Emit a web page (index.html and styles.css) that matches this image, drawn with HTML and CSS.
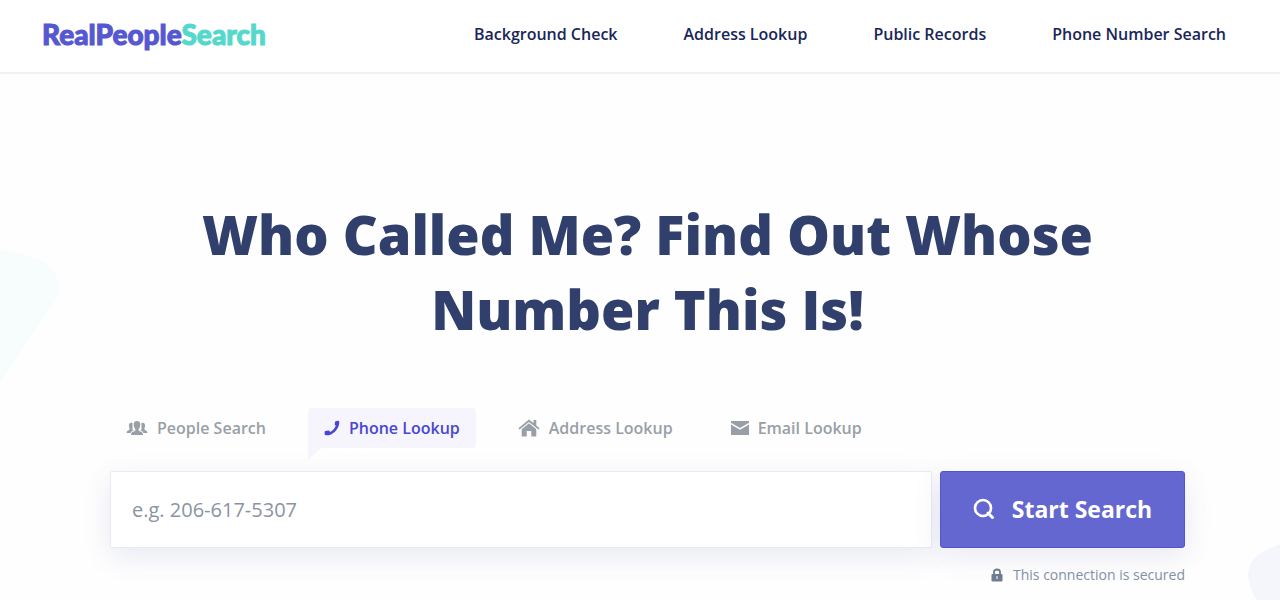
FILE: index.html
```html
<!DOCTYPE html>
<html lang="en">
<head>
    <meta charset="UTF-8">
    <meta name="viewport" content="width=device-width, initial-scale=1.0">
    <title>Phone Lookup - RealPeopleSearch</title>
    <link rel="stylesheet" href="styles.css">
</head>
<body>
    <header class="header">
        <a href="#" class="logo">RealPeople<span>Search</span></a>
        <nav class="nav">
            <a href="#">Background Check</a>
            <a href="#">Address Lookup</a>
            <a href="#">Public Records</a>
            <a href="#">Phone Number Search</a>
        </nav>
    </header>

    <main class="hero">
        <svg class="shape shape-left" width="60" height="140" viewBox="0 0 60 140" aria-hidden="true">
            <path d="M0 2L38 13Q53 19 58 35Q61 46 54 57L36 82L0 136Z" fill="#f6fdfc"/>
        </svg>
        <svg class="shape shape-right" width="32" height="58" viewBox="0 0 32 58" aria-hidden="true">
            <path d="M32 1L16 8Q0 17 0 33Q1 47 10 58H32Z" fill="#f5f5fc"/>
        </svg>

        <div class="container">
            <h1>Who Called Me? Find Out Whose Number This Is!</h1>

            <div class="tabs">
                <button type="button" class="tab">
                    <svg width="22" height="16" viewBox="0 0 22 16" fill="currentColor" aria-hidden="true">
                        <path d="M11 1C8.600 1 7.500 2.600 7.700 5C7.800 7 8.500 8.300 9.400 9V10.500C8.500 11.500 5 11.500 5 15H17C17 11.500 13.500 11.500 12.600 10.500V9C13.500 8.300 14.200 7 14.300 5C14.500 2.600 13.400 1 11 1Z"/>
                        <path d="M6.600 3C4.500 2 2.800 3.200 2.900 5.500C3 7.500 3.500 8.500 3.700 9C3.500 10.500 1 10 .5 13H4.500C5 11.500 6.500 10.800 7.600 10.300C7.300 9.800 6 9.700 6.500 8.500C6.700 8 6.300 5 6.600 3Z"/>
                        <path d="M15.400 3C17.500 2 19.200 3.200 19.100 5.500C19 7.500 18.500 8.500 18.300 9C18.500 10.500 21 10 21.500 13H17.500C17 11.500 15.500 10.800 14.400 10.300C14.700 9.800 16 9.700 15.500 8.500C15.300 8 15.700 5 15.400 3Z"/>
                    </svg>
                    People Search
                </button>
                <button type="button" class="tab active">
                    <svg width="16" height="16" viewBox="0 0 16 16" fill="currentColor" aria-hidden="true">
                        <path d="M11.600 1.300L14.200.7Q15 .6 15.200 1.400C16 6 11.500 13.500 4.700 15.200Q2.500 15.500 1.200 15Q.6 14.700.6 14L.7 11.800Q.8 11.100 1.500 10.900L4.500 10.500Q5.200 10.400 5.500 11L6 11.900C8.500 10.900 10.600 8.700 11.800 5.700L11 5.100Q10.500 4.600 10.700 4L11.100 1.900Q11.200 1.400 11.600 1.300Z"/>
                    </svg>
                    Phone Lookup
                </button>
                <button type="button" class="tab">
                    <svg width="22" height="18" viewBox="0 0 22 18" fill="currentColor" aria-hidden="true">
                        <path d="M11 .5L.4 9.200L1.600 10.500L11 2.900L20.400 10.500L21.600 9.200L18.300 6.400V1H15.500V4.100Z"/>
                        <path d="M11 4.300L3.700 10.200V17.500H8.700V12H13.300V17.500H18.300V10.200Z"/>
                    </svg>
                    Address Lookup
                </button>
                <button type="button" class="tab">
                    <svg width="18" height="14" viewBox="0 0 18 14" fill="currentColor" aria-hidden="true">
                        <path d="M0 0H18V1.800L9 7L0 1.800Z"/>
                        <path d="M0 3.500L9 8.800L18 3.500V14H0Z"/>
                    </svg>
                    Email Lookup
                </button>
            </div>

            <form class="search-form">
                <input type="tel" class="search-input" placeholder="e.g. 206-617-5307" aria-label="Phone number">
                <button type="submit" class="search-btn">
                    <svg width="22" height="22" viewBox="0 0 22 22" fill="none" stroke="currentColor" stroke-width="2.600" aria-hidden="true">
                        <circle cx="10" cy="10" r="8"/>
                        <path d="M15 15L19.500 19.500" stroke-width="3" stroke-linecap="round"/>
                    </svg>
                    Start Search
                </button>
            </form>

            <p class="secured">
                <svg width="12" height="14" viewBox="0 0 12 14" aria-hidden="true">
                    <path d="M3 7V4Q3 1.500 6 1.500Q9 1.500 9 4V7" fill="none" stroke="#6d7c8f" stroke-width="1.800"/>
                    <rect x=".5" y="6" width="11" height="7.500" rx="1" fill="#6d7c8f"/>
                    <path d="M6 8V11" stroke="#c9d0d8" stroke-width="1.600"/>
                </svg>
                This connection is secured
            </p>
        </div>
    </main>
</body>
</html>
```
FILE: styles.css
```css
* {
    margin: 0;
    padding: 0;
    box-sizing: border-box;
}

body {
    font-family: 'Open Sans', 'Noto Sans', sans-serif;
    background: #fefefe;
    min-height: 100vh;
    display: flex;
    flex-direction: column;
}

.header {
    display: flex;
    align-items: center;
    justify-content: space-between;
    padding: 16px 54px 20px 42px;
    background: #fff;
    border-bottom: 2px solid #f0f0f2;
}

.logo {
    font-family: 'Lato Black', Lato, sans-serif;
    font-size: 28px;
    font-weight: 900;
    line-height: 36px;
    color: #5558d0;
    text-decoration: none;
    -webkit-text-stroke: 1px currentColor;
}

.logo span {
    color: #55d8cc;
}

.nav {
    display: flex;
    gap: 66px;
}

.nav a {
    color: #18265a;
    font-size: 16px;
    font-weight: 600;
    text-decoration: none;
}

.hero {
    position: relative;
    flex: 1;
    padding: 123px 95px 16px 110px;
    overflow: hidden;
}

/* background shapes */
.shape {
    position: absolute;
}

.shape-left {
    left: 0;
    top: 172px;
}

.shape-right {
    right: 0;
    bottom: 0;
}

.container {
    position: relative;
}

h1 {
    max-width: 960px;
    margin: 0 auto 61px;
    color: #303f6b;
    font-size: 54px;
    font-weight: 800;
    line-height: 75px;
    text-align: center;
}

.tabs {
    display: flex;
    gap: 26px;
    margin-bottom: 23px;
}

.tab {
    position: relative;
    display: flex;
    align-items: center;
    gap: 9px;
    height: 40px;
    padding: 0 16px;
    border: none;
    border-radius: 4px;
    background: none;
    color: #999fa7;
    font-family: inherit;
    font-size: 16px;
    font-weight: 600;
    cursor: pointer;
}

.tab.active {
    background: #f6f5fd;
    border-bottom-left-radius: 0;
    color: #4946d0;
}

/* speech bubble tail */
.tab.active::after {
    content: '';
    position: absolute;
    left: 0;
    top: 100%;
    width: 13px;
    height: 12px;
    background: #f6f5fd;
    clip-path: polygon(0 0, 100% 0, 0 100%);
}

.search-form {
    display: flex;
    gap: 8px;
}

.search-input {
    flex: 1;
    min-width: 0;
    height: 77px;
    padding: 0 21px;
    border: 1px solid #e7ebf2;
    border-radius: 2px;
    background: #fff;
    box-shadow: 0 8px 28px rgba(70, 80, 160, 0.12);
    color: #303f6b;
    font-family: inherit;
    font-size: 20px;
}

.search-input::placeholder {
    color: #8b93a3;
}

.search-btn {
    display: flex;
    align-items: center;
    justify-content: center;
    gap: 17px;
    width: 245px;
    padding-bottom: 2px;
    border: 1px solid #5553cf;
    border-radius: 3px;
    background: #6567d0;
    box-shadow: 0 8px 28px rgba(70, 80, 160, 0.12);
    color: #fff;
    font-family: inherit;
    font-size: 23px;
    font-weight: 700;
    cursor: pointer;
}

.secured {
    display: flex;
    align-items: center;
    justify-content: flex-end;
    gap: 10px;
    margin-top: 17px;
    color: #8290a6;
    font-size: 14px;
    line-height: 20px;
}

@media (max-width: 900px) {
    .header,
    .search-form {
        flex-direction: column;
    }

    .nav,
    .tabs {
        flex-wrap: wrap;
        gap: 16px;
    }

    .hero {
        padding: 40px 20px;
    }

    h1 {
        font-size: 36px;
        line-height: 48px;
    }

    .search-input {
        flex: none;
    }

    .search-btn {
        width: 100%;
        height: 77px;
    }
}
```
